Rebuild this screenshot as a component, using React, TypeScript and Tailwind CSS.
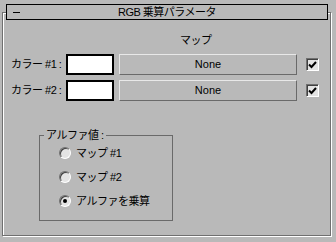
import React from 'react'

const font = "font-['Liberation_Sans','Noto_Sans_CJK_JP',sans-serif]"

function Check() {
  return (
    <div className="w-[13px] h-[13px] bg-[#e4e4e4] border border-t-[#707070] border-l-[#707070] border-r-white border-b-white shadow-[inset_1px_1px_0_#404040] flex items-center justify-center">
      <svg width="9" height="8" viewBox="0 0 9 8">
        <path d="M1 3.5 L3.5 6 L8 1" stroke="#000" strokeWidth="2" fill="none" />
      </svg>
    </div>
  )
}

function Radio({ checked }: { checked?: boolean }) {
  return (
    <div className="w-[12px] h-[12px] rounded-full bg-[#e4e4e4] border border-t-[#707070] border-l-[#707070] border-r-white border-b-white shadow-[inset_1px_1px_0_#404040] flex items-center justify-center">
      {checked && <div className="w-[4px] h-[4px] rounded-full bg-black" />}
    </div>
  )
}

function ColorRow({ label }: { label: string }) {
  return (
    <div className="flex items-center h-[21px]">
      <span className="w-[63px] pl-[8px] text-[11px] tracking-[-0.5px] whitespace-nowrap">{label}</span>
      <div className="w-[48px] h-[21px] bg-white border-2 border-black" />
      <div className="ml-[5px] w-[178px] h-[21px] border border-t-[#e8e8e8] border-l-[#e8e8e8] border-r-[#6a6a6a] border-b-[#6a6a6a] flex items-center justify-center text-[11px]">
        None
      </div>
      <div className="ml-[9px]">
        <Check />
      </div>
    </div>
  )
}

export default function App() {
  return (
    <div className={`w-[336px] h-[242px] bg-[#b9b9b9] pt-[4px] text-black ${font}`}>
      {/* rollout title */}
      <div className="relative z-10 ml-[6px] w-[322px] h-[16px] bg-[#b9b9b9] border border-black flex items-center">
        <div className="ml-[6px] w-[7px] h-[1px] bg-black" />
        <span className="flex-1 text-center text-[11px] tracking-[-0.5px] pr-[13px]">RGB 乗算パラメータ</span>
      </div>

      {/* rollout body */}
      <div className="-mt-[8px] ml-[2px] w-[329px] h-[224px] border border-[#707070] shadow-[inset_1px_1px_0_#fff,1px_1px_0_#fff]">
        <div className="pt-[20px] pl-[177px] text-[11px] tracking-[-0.5px] leading-[14px]">マップ</div>

        <div className="mt-[7px] flex flex-col gap-[5px]">
          <ColorRow label="カラー #1 :" />
          <ColorRow label="カラー #2 :" />
        </div>

        {/* alpha group */}
        <div className="relative mt-[34px] ml-[36px] w-[134px] h-[86px] border border-[#6a6a6a]">
          <span className="absolute -top-[8px] left-[4px] px-[2px] bg-[#b9b9b9] text-[11px] tracking-[-0.5px] leading-[14px]">アルファ値 :</span>
          <div className="pt-[11px] pl-[19px] flex flex-col gap-[12px]">
            <div className="flex items-center gap-[5px] h-[12px]">
              <Radio />
              <span className="text-[11px] tracking-[-0.5px]">マップ #1</span>
            </div>
            <div className="flex items-center gap-[5px] h-[12px]">
              <Radio />
              <span className="text-[11px] tracking-[-0.5px]">マップ #2</span>
            </div>
            <div className="flex items-center gap-[5px] h-[12px]">
              <Radio checked />
              <span className="text-[11px] tracking-[-0.5px]">アルファを乗算</span>
            </div>
          </div>
        </div>
      </div>
    </div>
  )
}
